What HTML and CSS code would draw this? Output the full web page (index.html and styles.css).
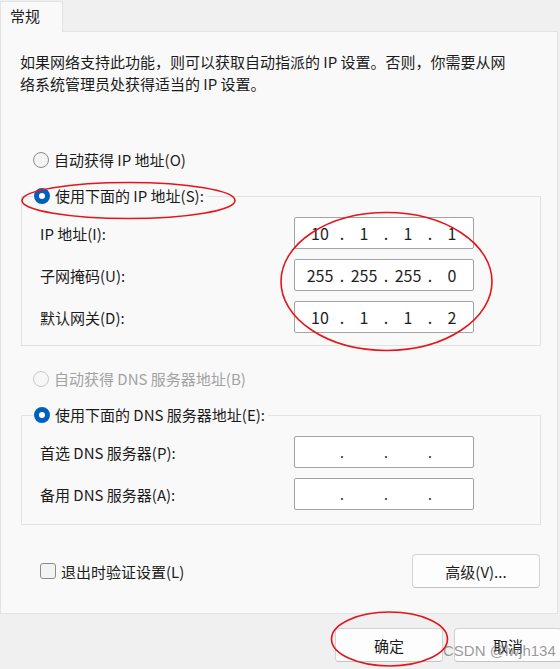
FILE: index.html
```html
<!DOCTYPE html>
<html lang="zh-CN">
<head>
<meta charset="utf-8">
<title>IPv4 属性</title>
<link rel="stylesheet" href="styles.css">
</head>
<body>
<div class="dialog">
  <div class="tabs"><div class="tab">常规</div></div>
  <div class="panel">
    <p class="intro">如果网络支持此功能，则可以获取自动指派的 IP 设置。否则，你需要从网络系统管理员处获得适当的 IP 设置。</p>

    <div class="radio-row first"><span class="radio"></span><span>自动获得 IP 地址(O)</span></div>

    <fieldset class="group">
      <legend class="radio-row"><span class="radio checked"></span><span>使用下面的 IP 地址(S):</span></legend>
      <div class="rows">
        <div class="field-label">IP 地址(I):</div>
        <div class="ipbox"><span>10</span><i>.</i><span>1</span><i>.</i><span>1</span><i>.</i><span>1</span></div>
        <div class="field-label">子网掩码(U):</div>
        <div class="ipbox"><span>255</span><i>.</i><span>255</span><i>.</i><span>255</span><i>.</i><span>0</span></div>
        <div class="field-label">默认网关(D):</div>
        <div class="ipbox"><span>10</span><i>.</i><span>1</span><i>.</i><span>1</span><i>.</i><span>2</span></div>
      </div>
    </fieldset>

    <div class="radio-row dns-auto disabled"><span class="radio"></span><span>自动获得 DNS 服务器地址(B)</span></div>

    <fieldset class="group group-dns">
      <legend class="radio-row"><span class="radio checked"></span><span>使用下面的 DNS 服务器地址(E):</span></legend>
      <div class="rows">
        <div class="field-label">首选 DNS 服务器(P):</div>
        <div class="ipbox empty"><span></span><i>.</i><span></span><i>.</i><span></span><i>.</i><span></span></div>
        <div class="field-label">备用 DNS 服务器(A):</div>
        <div class="ipbox empty"><span></span><i>.</i><span></span><i>.</i><span></span><i>.</i><span></span></div>
      </div>
    </fieldset>

    <div class="bottom-row">
      <label class="check-row"><span class="checkbox"></span><span>退出时验证设置(L)</span></label>
      <button class="btn adv">高级(V)...</button>
    </div>
  </div>
  <div class="footer">
    <button class="btn ok">确定</button>
    <button class="btn cancel">取消</button>
  </div>
</div>

<div class="watermark">CSDN @lwjh134</div>

<svg class="marks" width="560" height="669" viewBox="0 0 560 669" aria-hidden="true">
  <ellipse cx="128.5" cy="200.5" rx="106.5" ry="18" />
  <ellipse cx="386.5" cy="281.5" rx="105.5" ry="69" />
  <ellipse cx="389.5" cy="639" rx="58" ry="27" />
</svg>
</body>
</html>
```
FILE: styles.css
```css
* { box-sizing: border-box; }

html, body {
  margin: 0;
  padding: 0;
}

body {
  width: 560px;
  height: 669px;
  overflow: hidden;
  background: #f0f0f0;
  font-family: "Noto Sans CJK SC", "Noto Sans", sans-serif;
  font-size: 15px;
  color: #1b1b1b;
  position: relative;
}

.dialog {
  width: 560px;
}

.tabs {
  height: 31px;
  display: flex;
  align-items: flex-end;
}

.tab {
  position: relative;
  z-index: 1;
  width: 63px;
  height: 31px;
  margin-bottom: -1px;
  background: #f9f9f9;
  border: 1px solid #e3e3e3;
  border-bottom: none;
  padding-left: 9px;
  font-size: 15px;
  line-height: 28px;
}

.panel {
  width: 558px;
  height: 583px;
  background: #f9f9f9;
  border: 1px solid #e3e3e3;
  padding: 19px 0 0 0;
}

.intro {
  margin: 0 0 0 19px;
  width: 496px;
  line-height: 22px;
}

.radio-row {
  display: flex;
  align-items: center;
  height: 22px;
  line-height: 22px;
  white-space: nowrap;
}

.radio-row.first {
  margin: 54px 0 0 32px;
}

.radio {
  width: 16px;
  height: 16px;
  border-radius: 50%;
  border: 1px solid #8b8b8b;
  background: #f4f4f4;
  margin-right: 5px;
  flex: none;
}

.radio.checked {
  border: 5px solid #0060be;
  background: #ffffff;
}

.disabled {
  color: #a2a2a2;
}

.disabled .radio {
  border-color: #c8c8c8;
  background: #f7f7f7;
}

.group {
  margin: 14px 0 0 20px;
  width: 520px;
  border: 1px solid #e2e2e2;
  padding: 0 0 12px 18px;
  min-width: 0;
}

.group legend {
  padding: 0 3px 0 1px;
  margin-left: -7px;
  background: #f9f9f9;
}

.rows {
  display: grid;
  grid-template-columns: 254px 180px;
  row-gap: 10px;
  align-items: center;
  margin-top: 10px;
}

.field-label {
  white-space: nowrap;
}

.ipbox {
  height: 32px;
  background: #ffffff;
  border: 1px solid #a3a3a3;
  border-radius: 2px;
  display: flex;
  align-items: center;
  padding-left: 7px;
  font-size: 16px;
  color: #1e1e1e;
}

.ipbox span {
  width: 36px;
  text-align: center;
}

.ipbox i {
  font-style: normal;
  width: 8px;
  text-align: center;
}

.ipbox.empty i {
  font-size: 14px;
}

.dns-auto {
  margin: 22px 0 0 32px;
}

.group-dns {
  margin-top: 14px;
  padding-bottom: 14px;
}

.bottom-row {
  display: flex;
  align-items: center;
  justify-content: space-between;
  margin: 29px 0 0 39px;
  width: 500px;
}

.check-row {
  display: flex;
  align-items: center;
  gap: 5px;
}

.checkbox {
  width: 16px;
  height: 16px;
  border: 1px solid #8b8b8b;
  border-radius: 3px;
  background: #f3f3f3;
}

.btn {
  font-family: "Noto Sans CJK SC", "Noto Sans", sans-serif;
  font-size: 15px;
  color: #1b1b1b;
  background: #fdfdfd;
  border: 1px solid #d3d3d3;
  border-bottom-color: #c4c4c4;
  border-radius: 4px;
  height: 34px;
  padding: 0;
}

.adv {
  width: 128px;
}

.footer {
  display: flex;
  gap: 11px;
  padding: 14px 0 0 335px;
}

.ok, .cancel {
  width: 108px;
  flex: none;
}

.watermark {
  position: absolute;
  left: 443px;
  top: 642px;
  font-family: "Liberation Sans", Arial, sans-serif;
  font-size: 15px;
  color: rgba(120, 120, 120, 0.75);
  white-space: nowrap;
}

.marks {
  position: absolute;
  left: 0;
  top: 0;
  pointer-events: none;
}

.marks ellipse {
  fill: none;
  stroke: #e3151a;
  stroke-width: 1.6;
}
```
